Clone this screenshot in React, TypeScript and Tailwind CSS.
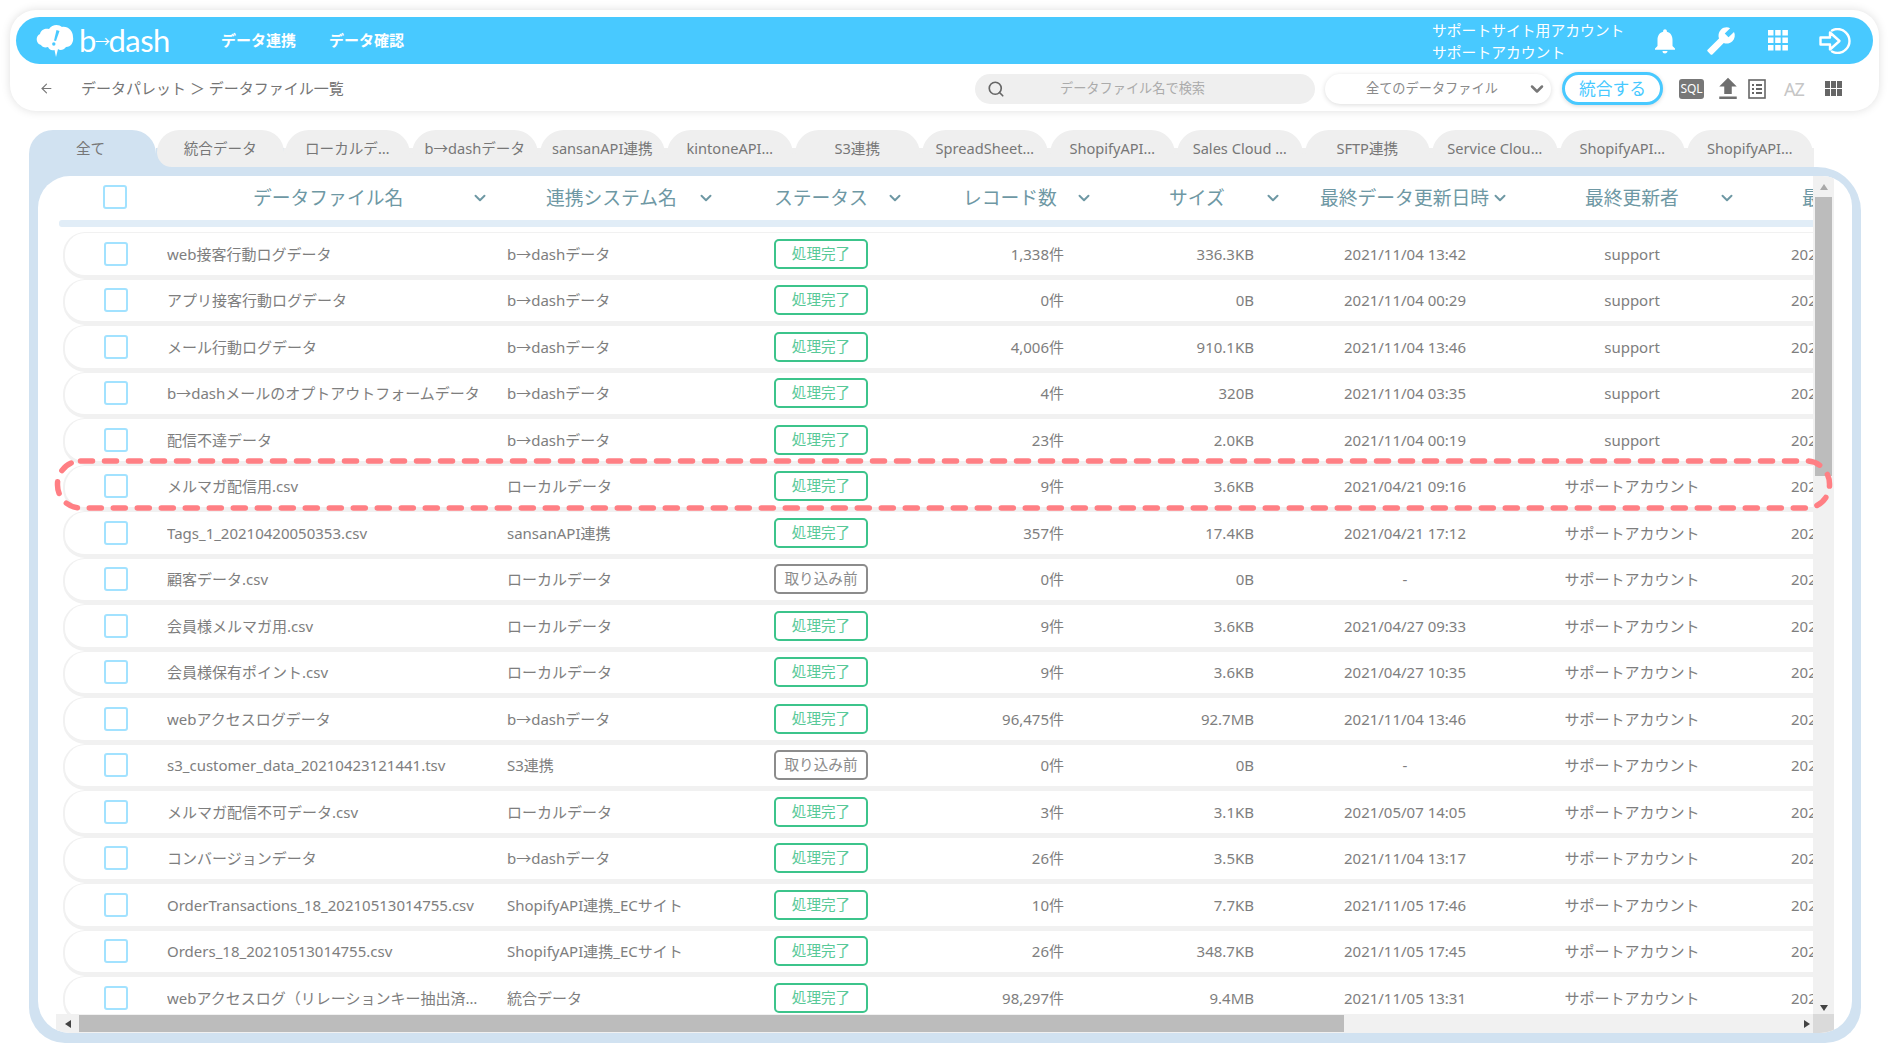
import React from "react";
import { ChevronDown, Search, ArrowLeft } from "lucide-react";
import { MdNotifications, MdBuild, MdFileUpload } from "react-icons/md";

type Row = { name: string; sys: string; done: boolean; rec: string; size: string; date: string; user: string };
const S = "support";
const A = "サポートアカウント";
const B = "b→dashデータ";
const L = "ローカルデータ";
const SH = "ShopifyAPI連携_ECサイト";
const rows: Row[] = [
  { name: "web接客行動ログデータ", sys: B, done: true, rec: "1,338件", size: "336.3KB", date: "2021/11/04 13:42", user: S },
  { name: "アプリ接客行動ログデータ", sys: B, done: true, rec: "0件", size: "0B", date: "2021/11/04 00:29", user: S },
  { name: "メール行動ログデータ", sys: B, done: true, rec: "4,006件", size: "910.1KB", date: "2021/11/04 13:46", user: S },
  { name: "b→dashメールのオプトアウトフォームデータ", sys: B, done: true, rec: "4件", size: "320B", date: "2021/11/04 03:35", user: S },
  { name: "配信不達データ", sys: B, done: true, rec: "23件", size: "2.0KB", date: "2021/11/04 00:19", user: S },
  { name: "メルマガ配信用.csv", sys: L, done: true, rec: "9件", size: "3.6KB", date: "2021/04/21 09:16", user: A },
  { name: "Tags_1_20210420050353.csv", sys: "sansanAPI連携", done: true, rec: "357件", size: "17.4KB", date: "2021/04/21 17:12", user: A },
  { name: "顧客データ.csv", sys: L, done: false, rec: "0件", size: "0B", date: "-", user: A },
  { name: "会員様メルマガ用.csv", sys: L, done: true, rec: "9件", size: "3.6KB", date: "2021/04/27 09:33", user: A },
  { name: "会員様保有ポイント.csv", sys: L, done: true, rec: "9件", size: "3.6KB", date: "2021/04/27 10:35", user: A },
  { name: "webアクセスログデータ", sys: B, done: true, rec: "96,475件", size: "92.7MB", date: "2021/11/04 13:46", user: A },
  { name: "s3_customer_data_20210423121441.tsv", sys: "S3連携", done: false, rec: "0件", size: "0B", date: "-", user: A },
  { name: "メルマガ配信不可データ.csv", sys: L, done: true, rec: "3件", size: "3.1KB", date: "2021/05/07 14:05", user: A },
  { name: "コンバージョンデータ", sys: B, done: true, rec: "26件", size: "3.5KB", date: "2021/11/04 13:17", user: A },
  { name: "OrderTransactions_18_20210513014755.csv", sys: SH, done: true, rec: "10件", size: "7.7KB", date: "2021/11/05 17:46", user: A },
  { name: "Orders_18_20210513014755.csv", sys: SH, done: true, rec: "26件", size: "348.7KB", date: "2021/11/05 17:45", user: A },
  { name: "webアクセスログ（リレーションキー抽出済みデータ）", sys: "統合データ", done: true, rec: "98,297件", size: "9.4MB", date: "2021/11/05 13:31", user: A },
];

const tabs = ["統合データ", "ローカルデ…", "b→dashデータ", "sansanAPI連携", "kintoneAPI…", "S3連携", "SpreadSheet…", "ShopifyAPI…", "Sales Cloud …", "SFTP連携", "Service Clou…", "ShopifyAPI…", "ShopifyAPI…"];

const heads = [
  { t: "データファイル名", c: "w-[340px] pl-[86px] pr-[19px]" },
  { t: "連携システム名", c: "w-[267px] pl-[39px] pr-[60px]" },
  { t: "ステータス", c: "w-[189px] pr-[60px]" },
  { t: "レコード数", c: "w-[206px] pr-[77px]" },
  { t: "サイズ", c: "w-[151px] pr-[39px]" },
  { t: "最終データ更新日時", c: "w-[265px] pr-[77px]" },
  { t: "最終更新者", c: "w-[217px] pr-[67px]" },
];

function Check() {
  return <div className="w-[24px] h-[24px] rounded-[3px] border-2 border-[#a2e2ff] bg-white" />;
}

function Logo() {
  return (
    <div className="flex items-center ml-[19px] w-[186px]">
      <svg width="40" height="34" viewBox="0 0 40 34" className="shrink-0">
        <path
          d="M6 21C1 20 0 12 5 10C6 5 11 4 14 5C17 0 24 0 27 3C33 2 38 7 38 13C39 18 36 23 31 23C29 26 25 27 23 25L21 33L19.5 26C16 27 14 25 13 23C10 24 7 23 6 21Z"
          fill="#fff"
        />
        <path d="M21.5 6L24.5 7L21 17L19 16.4Z" fill="#48c9ff" />
        <circle cx="18.8" cy="20" r="1.7" fill="#48c9ff" />
      </svg>
      <span className="ml-[4px] text-white text-[31px] leading-none font-['Lato',sans-serif] font-normal tracking-[-0.5px] flex items-center whitespace-nowrap">
        b<span className="text-[15px] font-['Noto_Sans_CJK_JP',sans-serif] mx-[-1px]">→</span>dash
      </span>
    </div>
  );
}

function Status({ done }: { done: boolean }) {
  return done ? (
    <div className="w-[94px] h-[30px] flex items-center justify-center rounded-[5px] border-2 border-[#3cc48b] text-[#58c998] text-[14.6px]">処理完了</div>
  ) : (
    <div className="w-[94px] h-[30px] flex items-center justify-center rounded-[5px] border-2 border-[#8c8c8c] text-[#8c8c8c] text-[14.6px]">取り込み前</div>
  );
}

function Tri({ d }: { d: "u" | "d" | "l" | "r" }) {
  const p = { u: "M1 8L5 2L9 8Z", d: "M1 2L9 2L5 8Z", l: "M8 1L8 9L2 5Z", r: "M2 1L8 5L2 9Z" }[d];
  return (
    <svg width="10" height="10" viewBox="0 0 10 10">
      <path d={p} fill={d === "u" ? "#a9a9a9" : "#444"} />
    </svg>
  );
}

export default function App() {
  return (
    <div className="relative w-[1890px] h-[1063px] overflow-hidden bg-white pt-[10px] font-['Noto_Sans','Noto_Sans_CJK_JP',sans-serif] text-[#7e7e7e]">
      {/* header card */}
      <div className="ml-[10px] w-[1869px] h-[101px] rounded-[26px] bg-white px-[6px] pt-[7px] shadow-[0_0_10px_rgba(0,0,0,0.13)]">
        <div className="h-[47px] rounded-full bg-[#48c9ff] flex items-center text-white">
          <Logo />
          <div className="text-[15px] font-bold w-[108px] whitespace-nowrap">データ連携</div>
          <div className="text-[15px] font-bold whitespace-nowrap">データ確認</div>
          <div className="ml-[1028px] w-[210px] text-[14.8px] leading-[22px] whitespace-nowrap">
            <div>サポートサイト用アカウント</div>
            <div>サポートアカウント</div>
          </div>
          <div className="flex items-center">
            <MdNotifications size={30} className="ml-[8px]" />
            <MdBuild size={30} className="ml-[26px] -scale-x-100" />
            <svg width="20" height="21" viewBox="0 0 20 21" className="ml-[32px]" fill="#fff">
              <rect x="0" y="0" width="5.5" height="5.5" /><rect x="7.2" y="0" width="5.5" height="5.5" /><rect x="14.4" y="0" width="5.5" height="5.5" />
              <rect x="0" y="7.5" width="5.5" height="5.5" /><rect x="7.2" y="7.5" width="5.5" height="5.5" /><rect x="14.4" y="7.5" width="5.5" height="5.5" />
              <rect x="0" y="15" width="5.5" height="5.5" /><rect x="7.2" y="15" width="5.5" height="5.5" /><rect x="14.4" y="15" width="5.5" height="5.5" />
            </svg>
            <svg width="32" height="26" viewBox="0 0 32 26" className="ml-[31px]" fill="none" stroke="#fff" strokeWidth="2.4">
              <path d="M13 2.5C15 1.500 16.500 1 18.500 1C25 1 30.500 6.500 30.500 13C30.500 19.500 25 25 18.500 25C16.500 25 15 24.500 13 23.500" strokeLinecap="round" />
              <path d="M1.500 9.500H11V4.500L20.500 13L11 21.500V16.500H1.500Z" strokeLinejoin="round" />
            </svg>
          </div>
        </div>
        <div className="flex items-center h-[47px] mt-[1px]">
          <ArrowLeft size={15} className="ml-[23px] text-[#777] shrink-0" strokeWidth={1.8} />
          <div className="ml-[27px] w-[894px] text-[15px] text-[#757575] whitespace-nowrap">データパレット ＞ データファイル一覧</div>
          <div className="w-[340px] h-[30px] rounded-full bg-[#efefef] flex items-center">
            <Search size={18} className="ml-[12px] text-[#666] shrink-0" strokeWidth={2.2} />
            <span className="ml-[55px] text-[13.200px] text-[#ababab] whitespace-nowrap">データファイル名で検索</span>
          </div>
          <div className="ml-[10px] w-[226px] h-[30px] rounded-full bg-white shadow-[0_1px_5px_rgba(0,0,0,0.14)] flex items-center">
            <span className="ml-[41px] text-[13.200px] text-[#8a8a8a] whitespace-nowrap">全てのデータファイル</span>
            <ChevronDown size={20} className="ml-[29px] text-[#777]" strokeWidth={3} />
          </div>
          <div className="ml-[11px] w-[101px] h-[33px] rounded-full border-[3px] border-[#48c9ff] bg-white flex items-center justify-center text-[#48c9ff] text-[16.800px] shadow-[0_1px_4px_rgba(0,0,0,0.15)]">統合する</div>
          <div className="ml-[16px] w-[25px] h-[20px] rounded-[3px] bg-[#777] text-white text-[12px] leading-[20px] text-center">SQL</div>
          <MdFileUpload size={30} className="ml-[9px] text-[#6f6f6f]" />
          <svg width="18" height="20" viewBox="0 0 18 20" className="ml-[5px]" fill="none">
            <rect x="1" y="1" width="16" height="18" stroke="#666" strokeWidth="1.600" />
            <path d="M4 6H6M8 6H14M4 10H6M8 10H14M4 14H6M8 14H14" stroke="#666" strokeWidth="1.800" />
          </svg>
          <div className="ml-[18px] w-[22px] text-[#c6c6c6] text-[18px] leading-none tracking-[-1px] whitespace-nowrap">AZ</div>
          <svg width="17" height="15" viewBox="0 0 17 15" className="ml-[19px]" fill="#666">
            <rect x="0" y="0" width="5" height="7" /><rect x="6" y="0" width="5" height="7" /><rect x="12" y="0" width="5" height="7" />
            <rect x="0" y="8" width="5" height="7" /><rect x="6" y="8" width="5" height="7" /><rect x="12" y="8" width="5" height="7" />
          </svg>
        </div>
      </div>

      {/* tabs */}
      <div className="ml-[29px] mt-[19px] flex h-[37px] text-[14.6px] text-[#777]">
        <div className="w-[127px] rounded-t-[24px] bg-[#d1e2f1] flex items-center justify-center pr-[4px]">全て</div>
        {tabs.map((t, i) => (
          <div
            key={i}
            className={
              i === 0
                ? "w-[127.500px] bg-[linear-gradient(transparent_50%,#d1e2f1_50%)]"
                : "w-[127.500px] bg-[linear-gradient(transparent_50%,#efefef_50%)]"
            }
          >
            <div
              className={
                i === 0
                  ? "ml-[1px] h-full rounded-t-[24px] rounded-bl-[16px] bg-[#efefef] flex items-center justify-center whitespace-nowrap"
                  : "ml-[1px] mr-[1px] h-full rounded-t-[24px] bg-[#efefef] flex items-center justify-center whitespace-nowrap"
              }
            >
              {t}
            </div>
          </div>
        ))}
      </div>

      {/* panel */}
      <div className="ml-[29px] w-[1832px] h-[876px] rounded-b-[36px] rounded-tr-[44px] bg-[#d1e2f1] px-[9px] pt-[9px] pb-[10px]">
        <div className="h-full rounded-[32px] rounded-tr-[30px] bg-white overflow-hidden flex flex-col pl-[18px] pr-[18px]">
          <div className="flex flex-1 min-h-0">
            <div className="w-[1757px] overflow-hidden">
              {/* header */}
              <div className="flex items-center h-[44px] ml-[7px] w-[2000px] text-[18.800px] text-[#6e98a4] whitespace-nowrap">
                <div className="w-[104px] flex justify-center -mt-[2px]"><Check /></div>
                {heads.map((h) => (
                  <div key={h.t} className={`flex items-center justify-between ${h.c}`}>
                    <span>{h.t}</span>
                    <ChevronDown size={18} strokeWidth={2.6} className="-mr-[1px]" />
                  </div>
                ))}
                <span>最終作成日時</span>
              </div>
              <div className="h-[7px] ml-[3px] mb-[5px] rounded-l-[3px] bg-[#e1edf7]" />
              {/* rows */}
              {rows.map((r, i) => (
                <div
                  key={i}
                  className="flex items-center h-[46.500px] ml-[7px] w-[1751px] overflow-hidden rounded-l-[22px] border-l-2 border-t border-b-[4px] border-[#f1f1f1] text-[15px] whitespace-nowrap"
                >
                  <div className="w-[102px] shrink-0 flex justify-center"><Check /></div>
                  <div className="w-[340px] shrink-0 pr-[22px] truncate">{r.name}</div>
                  <div className="w-[267px] shrink-0">{r.sys}</div>
                  <div className="w-[94px] shrink-0"><Status done={r.done} /></div>
                  <div className="w-[196px] shrink-0 text-right">{r.rec}</div>
                  <div className="w-[190px] shrink-0 text-right">{r.size}</div>
                  <div className="w-[302px] shrink-0 text-center">{r.date}</div>
                  <div className="w-[152px] shrink-0 text-center">{r.user}</div>
                  <div className="pl-[83px] shrink-0">{r.date === "-" ? "2021/04/21 09:16" : r.date}</div>
                </div>
              ))}
            </div>
            {/* vertical scrollbar */}
            <div className="w-[21px] bg-[#f1f1f1] flex flex-col items-center">
              <div className="h-[21px] flex items-center justify-center"><Tri d="u" /></div>
              <div className="w-[17px] h-[279px] bg-[#bcbcbc]" />
              <div className="flex-1 flex items-end justify-center pb-[1px]"><Tri d="d" /></div>
            </div>
          </div>
          {/* horizontal scrollbar */}
          <div className="h-[19px] flex items-stretch bg-[#f1f1f1]">
            <div className="w-[23px] flex items-center justify-center"><Tri d="l" /></div>
            <div className="w-[1265px] my-[1px] bg-[#bcbcbc]" />
            <div className="w-[469px] flex items-center justify-end pr-[1px]"><Tri d="r" /></div>
            <div className="w-[21px] bg-[#dadada]" />
          </div>
        </div>
      </div>

      {/* red dashed annotation over row */}
      <svg className="absolute left-0 top-0 pointer-events-none" width="1890" height="1063" fill="none">
        <rect x="57.500" y="461" width="1772" height="47" rx="23" stroke="#ff7f84" strokeWidth="5.500" strokeDasharray="12 12" strokeLinecap="round" />
      </svg>
    </div>
  );
}
